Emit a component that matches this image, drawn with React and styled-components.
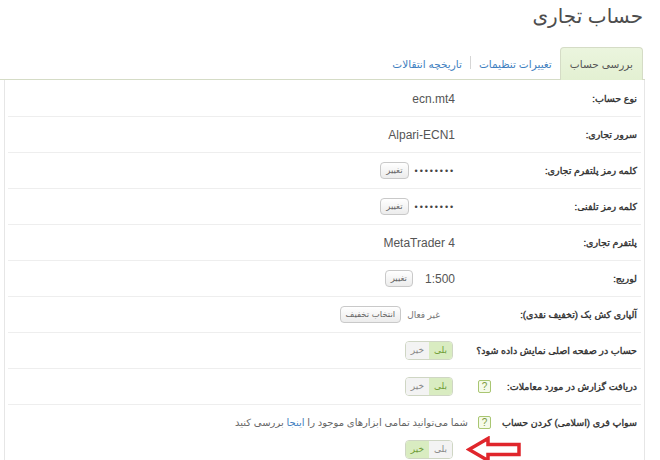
import React from "react";
import styled, { createGlobalStyle } from "styled-components";

const GlobalStyle = createGlobalStyle`
  body {
    margin: 0;
    background: #fff;
    font-family: "Liberation Sans", "DejaVu Sans", sans-serif;
  }
`;

const Page = styled.div`
  direction: rtl;
  width: 645px;
`;

const Title = styled.h1`
  margin: 0;
  padding: 0 2px 0 0;
  height: 46px;
  font-size: 20px;
  line-height: 32px;
  font-weight: normal;
  color: #4d4d4d;
`;

const TabBar = styled.div`
  display: flex;
  align-items: flex-end;
  height: 33px;
  padding-right: 2px;
  border-bottom: 1px solid #d5dcc6;
`;

const Tab = styled.div`
  display: flex;
  align-items: center;
  height: 32px;
  padding: 0 ${(p) => (p.$active ? 9 : 7)}px;
  font-size: 10.5px;
  color: ${(p) => (p.$active ? "#555" : "#3f7fc0")};
  background: ${(p) => (p.$active ? "linear-gradient(#ebf5de, #e3f0d2)" : "transparent")};
  border: 1px solid ${(p) => (p.$active ? "#d5dcc6" : "transparent")};
  border-bottom: none;
  border-radius: 4px 4px 0 0;
  margin-bottom: -1px;
`;

const TabDivider = styled.span`
  width: 1px;
  height: 13px;
  margin: 0 0 10px;
  background: #d6d6d6;
`;

const Panel = styled.div`
  margin-left: 4px;
  padding: 1px 3px 0;
  border-left: 1px solid #e6e6e6;
  border-right: 1px solid #e6e6e6;
`;

const Row = styled.div`
  display: flex;
  align-items: center;
  height: 35px;
  padding-right: 4px;
  border-bottom: 1px solid #eeeeee;
`;

const StackRow = styled.div`
  display: flex;
  flex-direction: column;
  padding-right: 4px;
  padding-top: 11px;
  height: 60px;
`;

const Line = styled.div`
  display: flex;
  align-items: center;
`;

const Label = styled.div`
  display: flex;
  align-items: center;
  justify-content: space-between;
  width: ${(p) => p.$width || 182}px;
  flex-shrink: 0;
  font-size: 9.5px;
  color: #2e2e2e;
  -webkit-text-stroke: 0.35px #2e2e2e;
  white-space: nowrap;
`;

const Value = styled.div`
  display: flex;
  align-items: center;
  gap: ${(p) => p.$gap ?? 8}px;
  padding-right: ${(p) => p.$indent || 0}px;
  font-size: 12px;
  color: #555;
  white-space: nowrap;
`;

const Dots = styled.span`
  font-size: 9px;
  letter-spacing: 1.9px;
  color: #444;
`;

const Muted = styled.span`
  font-size: 9px;
  color: #777;
`;

const Note = styled.span`
  font-size: 10px;
  color: #666;
  white-space: nowrap;
  a {
    color: #3f7fc0;
    text-decoration: none;
  }
`;

const SmallButton = styled.button`
  height: 17px;
  padding: 0 5px;
  font-family: "DejaVu Sans", sans-serif;
  font-size: 8.5px;
  line-height: 15px;
  color: #666;
  border: 1px solid #c9c9c9;
  border-radius: 4px;
  background: linear-gradient(#ffffff, #ececec);
`;

const Help = styled.span`
  display: inline-flex;
  align-items: center;
  justify-content: center;
  width: 11px;
  height: 11px;
  margin-left: ${(p) => p.$gap ?? 23}px;
  font-family: "Liberation Sans", sans-serif;
  font-size: 10px;
  -webkit-text-stroke: 0;
  color: #7d9c3f;
  background: #f5faea;
  border: 1px solid #a9c672;
  border-radius: 2px;
`;

const Toggle = styled.div`
  display: inline-flex;
  height: 17px;
  border: 1px solid #cfd6c4;
  border-radius: 4px;
  overflow: hidden;
`;

const ToggleOption = styled.span`
  padding: 0 5px;
  font-family: "DejaVu Sans", sans-serif;
  font-size: 9px;
  line-height: 17px;
  color: ${(p) => (p.$on ? "#6f9c37" : "#888")};
  background: ${(p) => (p.$on ? "#d9ecc1" : "#f3f3f3")};
`;

const ToggleLine = styled.div`
  position: relative;
  display: flex;
  margin-top: 11px;
  padding-right: 184px;
`;

const Arrow = styled.svg`
  position: absolute;
  right: 115px;
  top: -4px;
`;

const YesNo = ({ value }) => (
  <Toggle>
    <ToggleOption $on={value}>بلی</ToggleOption>
    <ToggleOption $on={!value}>خیر</ToggleOption>
  </Toggle>
);

const rows = [
  { label: "نوع حساب:", value: "ecn.mt4" },
  { label: "سرور تجاری:", value: "Alpari-ECN1" },
  { label: "کلمه رمز پلتفرم تجاری:", secret: true, action: "تغییر", gap: 6 },
  { label: "کلمه رمز تلفنی:", secret: true, action: "تغییر", gap: 6 },
  { label: "پلتفرم تجاری:", value: "MetaTrader 4" },
  { label: "لوریج:", value: "1:500", action: "تغییر", gap: 12 },
  { label: "آلپاری کش بک (تخفیف نقدی):", muted: "غیر فعال", action: "انتخاب تخفیف", indent: 15, gap: 6 },
  { label: "حساب در صفحه اصلی نمایش داده شود؟", toggle: true, indent: 2 },
  { label: "دریافت گزارش در مورد معاملات:", toggle: true, help: true, indent: 2 },
];

export default function App() {
  return (
    <Page>
      <GlobalStyle />
      <Title>حساب تجاری</Title>
      <TabBar>
        <Tab $active>بررسی حساب</Tab>
        <Tab>تغییرات تنظیمات</Tab>
        <TabDivider />
        <Tab>تاریخچه انتقالات</Tab>
      </TabBar>
      <Panel>
        {rows.map((r) => (
          <Row key={r.label}>
            <Label>
              <span>{r.label}</span>
              {r.help && <Help>?</Help>}
            </Label>
            <Value $gap={r.gap} $indent={r.indent}>
              {r.value && <span>{r.value}</span>}
              {r.secret && <Dots>••••••••</Dots>}
              {r.muted && <Muted>{r.muted}</Muted>}
              {r.toggle && <YesNo value />}
              {r.action && <SmallButton>{r.action}</SmallButton>}
            </Value>
          </Row>
        ))}
        <StackRow>
          <Line>
            <Label $width={169}>
              <span>سواپ فری (اسلامی) کردن حساب</span>
              <Help $gap={10}>?</Help>
            </Label>
            <Note>
              شما می‌توانید تمامی ابزارهای موجود را <a href="#">اینجا</a> بررسی کنید
            </Note>
          </Line>
          <ToggleLine>
            <YesNo value={false} />
            <Arrow width="56" height="27" viewBox="0 0 56 27">
              <path
                d="M3 13.5 L22 2.5 L22 8.5 L53 8.5 L53 18.5 L22 18.5 L22 24.5 Z"
                fill="none"
                stroke="#e0262c"
                strokeWidth="3.5"
                strokeLinejoin="miter"
              />
            </Arrow>
          </ToggleLine>
        </StackRow>
      </Panel>
    </Page>
  );
}
